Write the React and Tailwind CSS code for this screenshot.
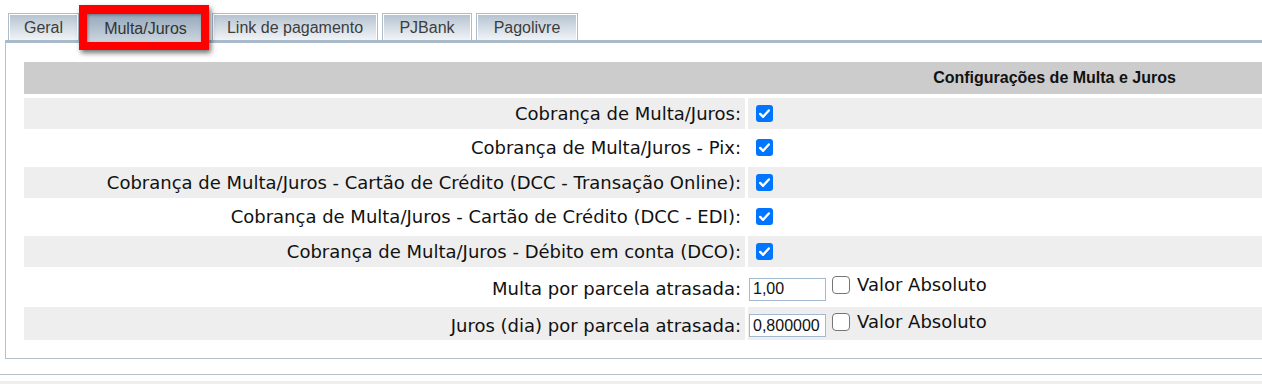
import React from "react";

const tabs = [
  { label: "Geral", className: "w-[71px]" },
  { label: "Multa/Juros", className: "w-[125px]", active: true },
  { label: "Link de pagamento", className: "w-[166px]" },
  { label: "PJBank", className: "w-[90px]" },
  { label: "Pagolivre", className: "w-[102px]" },
];

const checks = [
  "Cobrança de Multa/Juros:",
  "Cobrança de Multa/Juros - Pix:",
  "Cobrança de Multa/Juros - Cartão de Crédito (DCC - Transação Online):",
  "Cobrança de Multa/Juros - Cartão de Crédito (DCC - EDI):",
  "Cobrança de Multa/Juros - Débito em conta (DCO):",
];

const values = [
  { label: "Multa por parcela atrasada:", value: "1,00" },
  { label: "Juros (dia) por parcela atrasada:", value: "0,800000" },
];

const CheckedBox = () => (
  <div className="flex h-[17px] w-[17px] items-center justify-center rounded-[3px] bg-[#0075ff]">
    <svg viewBox="0 0 17 17" className="h-[17px] w-[17px]">
      <path
        d="M4.2 8.9l2.9 2.9 5.7-6.3"
        fill="none"
        stroke="#fff"
        strokeWidth="2.4"
        strokeLinecap="round"
        strokeLinejoin="round"
      />
    </svg>
  </div>
);

const Tab = ({ label, className, active }) => (
  <div
    className={
      active
        ? `relative z-10 mb-[-3px] flex h-[30px] items-center justify-center bg-linear-to-b from-[#93a6b9] to-[#cfd8e1] pt-[2px] font-['Liberation_Sans',Arial,sans-serif] text-[16px] text-[#333333] ${className}`
        : `flex h-[27px] items-center justify-center border border-b-0 border-[#aebdcc] bg-linear-to-b from-[#b4c2cf] to-[#f1f4f7] pt-[2px] shadow-[inset_1px_1px_0_#ffffff,inset_-1px_0_0_#ffffff] font-['Liberation_Sans',Arial,sans-serif] text-[16px] text-[#3d3d3d] ${className}`
    }
  >
    {label}
  </div>
);

export default function App() {
  return (
    <div className="relative h-[384px] w-full overflow-hidden bg-white font-['DejaVu_Sans',sans-serif] text-[#111111]">
      <div className="flex h-[40px] items-end gap-[4px] pl-[8px]">
        {tabs.map((t) => (
          <Tab key={t.label} {...t} />
        ))}
      </div>

      <div className="ml-[5px] w-[1400px] border-t-[3px] border-l border-b border-t-[#a9bacb] border-l-[#b5c0cb] border-b-[#b5c0cb] pt-[19px] pb-[18px] pl-[18px]">
        <div className="flex w-[1340px] flex-col gap-y-[3.5px]">
          <div className="grid h-[32px] grid-cols-[721px_1fr] items-center bg-[#cccccc]">
            <div />
            <div className="text-center font-['Liberation_Sans',Arial,sans-serif] text-[16px] font-bold text-[#111111]">
              Configurações de Multa e Juros
            </div>
          </div>

          {checks.map((label, i) => (
            <div key={label} className="grid grid-cols-[721px_1fr] gap-x-[3px]">
              <div
                className={`flex h-[31px] items-center justify-end pr-[4px] text-[18px] ${
                  i % 2 === 0 ? "bg-[#eeeeee]" : "bg-white"
                }`}
              >
                {label}
              </div>
              <div
                className={`flex h-[31px] items-center pl-[8px] ${
                  i % 2 === 0 ? "bg-[#eeeeee]" : "bg-white"
                }`}
              >
                <CheckedBox />
              </div>
            </div>
          ))}

          {values.map((row, i) => (
            <div key={row.label} className="grid grid-cols-[721px_1fr] gap-x-[3px]">
              <div
                className={`flex h-[33px] items-center justify-end pt-[4px] pr-[4px] text-[18px] ${
                  i === 1 ? "bg-[#eeeeee]" : "bg-white"
                }`}
              >
                {row.label}
              </div>
              <div
                className={`flex h-[33px] items-center ${
                  i === 1 ? "bg-[#eeeeee]" : "bg-white"
                }`}
              >
                <input
                  readOnly
                  value={row.value}
                  className="mt-[5px] ml-[1px] h-[23px] w-[77px] border border-[#a3b9cf] bg-white px-[3px] font-['Liberation_Sans',Arial,sans-serif] text-[16px] text-[#111111] outline-none"
                />
                <div className="mb-[3px] ml-[6px] h-[18px] w-[18px] rounded-[4px] border border-[#767676] bg-white" />
                <span className="mb-[4px] ml-[7px] text-[18px]">Valor Absoluto</span>
              </div>
            </div>
          ))}
        </div>
      </div>

      <div className="mt-[15px] h-px bg-[#b9c1c9]" />
      <div className="mt-[6px] h-[20px] bg-[#eeeeee]" />

      <div className="absolute top-[5px] left-[79px] z-20 h-[45px] w-[130px] border-8 border-t-[9px] border-[#ff0000] shadow-[2px_3px_5px_rgba(0,0,0,0.55),inset_1px_1px_3px_rgba(0,0,0,0.35)]" />
    </div>
  );
}
